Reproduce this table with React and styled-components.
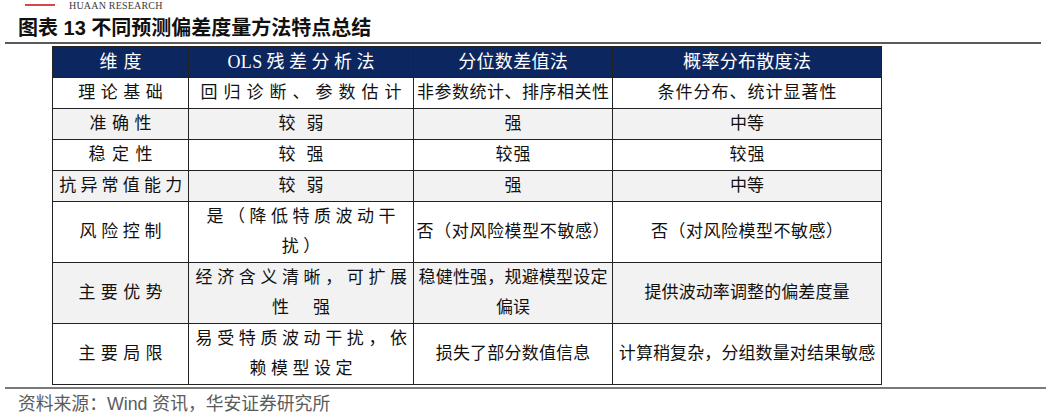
import React from "react";
import styled, { createGlobalStyle } from "styled-components";

const GlobalStyle = createGlobalStyle`
   html, body {
      margin: 0;
      padding: 0;
      background: #ffffff;
   }
   body {
      font-family: "Liberation Serif", "Noto Sans CJK SC", serif;
      color: #000;
   }
`;

const cjkSerif = `"Liberation Serif", "Noto Sans CJK SC", serif`;
const cjkSans = `"Liberation Sans", "Noto Sans CJK SC", sans-serif`;

export const ReportStyle = {
   Page: styled.div`
      width: 1046px;
      height: 418px;
      overflow: hidden;
      box-sizing: border-box;
   `,
   Brand: styled.div`
      height: 12px;
      display: flex;
      align-items: center;
      gap: 14px;
      padding-left: 25px;
      overflow: hidden;
   `,
   BrandLine: styled.span`
      width: 30px;
      height: 1.5px;
      margin-top: -2px;
      background-color: #d8464a;
   `,
   BrandText: styled.span`
      font-family: "Liberation Serif", serif;
      font-size: 10px;
      line-height: 10px;
      margin-top: -1px;
      color: #3a3a3a;
      letter-spacing: 0.2px;
   `,
   Title: styled.h1`
      margin: 0;
      padding: 2px 0 0 18px;
      height: 28px;
      line-height: 28px;
      font-family: ${cjkSans};
      font-size: 20px;
      font-weight: 700;
      color: #111;
   `,
   Rule: styled.div`
      margin: ${(p) => p.$margin || "0"};
      margin-left: 5px;
      width: ${(p) => p.$width || "1036px"};
      height: 2px;
      background-color: ${(p) => p.$color || "#5a5a5a"};
   `,
   TableWrap: styled.div`
      padding-left: 52px;
      margin-top: 2px;
   `,
   Table: styled.table`
      border-collapse: collapse;
      table-layout: fixed;
      width: 829px;
      border: 1px solid #222;
   `,
   Head: styled.th`
      background-color: #0c2660;
      color: #ffffff;
      font-family: ${cjkSerif};
      font-size: 18px;
      font-weight: 400;
      line-height: 30px;
      height: 30px;
      padding: 0 0 0 ${(p) => p.$sp}px;
      text-align: center;
      letter-spacing: ${(p) => p.$sp}px;
      border: 1px solid #222;
   `,
   Latin: styled.span`
      letter-spacing: 0.3px;
      margin-right: 4px;
   `,
   Row: styled.tr`
      background-color: ${(p) => (p.$shade ? "#f2f2f2" : "#ffffff")};
   `,
   Cell: styled.td`
      font-family: ${cjkSerif};
      font-size: 17px;
      line-height: 30px;
      padding: 0 2px;
      text-align: center;
      vertical-align: middle;
      white-space: nowrap;
      color: #111;
      border: 1px solid #222;
   `,
   // 한 줄 텍스트 - 자간은 줄마다 다름
   Line: styled.div`
      height: 30px;
      letter-spacing: ${(p) => p.$sp}px;
      padding-left: ${(p) => p.$sp}px;
   `,
   Source: styled.div`
      margin-top: 3px;
      padding-left: 18px;
      font-family: "Liberation Sans", "Noto Sans CJK SC", sans-serif;
      font-size: 17.8px;
      line-height: 24px;
      color: #5b5b5b;
   `,
};

const S = ReportStyle;

const headers = [
   { key: "dim", text: "维度", sp: 6 },
   { key: "ols", latin: "OLS", text: "残差分析法", sp: 4.5 },
   { key: "qnt", text: "分位数差值法", sp: 0.3 },
   { key: "prob", text: "概率分布散度法", sp: 0.3 },
];

// [text, letter-spacing]
const rows = [
   {
      label: ["理论基础", 5.5],
      cells: [
         [["回归诊断、参数估计", 6]],
         [["非参数统计、排序相关性", 0.5]],
         [["条件分布、统计显著性", 1]],
      ],
   },
   {
      label: ["准确性", 5.5],
      cells: [[["较弱", 11]], [["强", 0]], [["中等", 0]]],
   },
   {
      label: ["稳定性", 6.5],
      cells: [[["较强", 11]], [["较强", 1]], [["较强", 1]]],
   },
   {
      label: ["抗异常值能力", 4.2],
      cells: [[["较弱", 11]], [["强", 0]], [["中等", 0]]],
   },
   {
      label: ["风险控制", 4.7],
      cells: [
         [
            ["是（降低特质波动干", 4.5],
            ["扰）", 4.5],
         ],
         [["否（对风险模型不敏感）", 0.6]],
         [["否（对风险模型不敏感）", 0.5]],
      ],
   },
   {
      label: ["主要优势", 5.3],
      cells: [
         [
            ["经济含义清晰，可扩展", 4.6],
            ["性强", 24],
         ],
         [
            ["稳健性强，规避模型设定", 0.2],
            ["偏误", 0],
         ],
         [["提供波动率调整的偏差度量", 0.1]],
      ],
   },
   {
      label: ["主要局限", 5.3],
      cells: [
         [
            ["易受特质波动干扰，依", 4.6],
            ["赖模型设定", 4.5],
         ],
         [["损失了部分数值信息", 0.2]],
         [["计算稍复杂，分组数量对结果敏感", 0.1]],
      ],
   },
];

function App() {
   return (
      <>
         <GlobalStyle />
         <S.Page>
            <S.Brand>
               <S.BrandLine />
               <S.BrandText>HUAAN RESEARCH</S.BrandText>
            </S.Brand>

            <S.Title>图表 13 不同预测偏差度量方法特点总结</S.Title>
            <S.Rule />

            <S.TableWrap>
               <S.Table>
                  <colgroup>
                     <col style={{ width: 136 }} />
                     <col style={{ width: 225 }} />
                     <col style={{ width: 199 }} />
                     <col style={{ width: 269 }} />
                  </colgroup>
                  <thead>
                     <tr>
                        {headers.map((h) => (
                           <S.Head key={h.key} $sp={h.sp}>
                              {h.latin && <S.Latin>{h.latin}</S.Latin>}
                              {h.text}
                           </S.Head>
                        ))}
                     </tr>
                  </thead>
                  <tbody>
                     {rows.map((row, i) => (
                        <S.Row key={row.label[0]} $shade={i % 2 === 1}>
                           <S.Cell>
                              <S.Line $sp={row.label[1]}>{row.label[0]}</S.Line>
                           </S.Cell>
                           {row.cells.map((lines, j) => (
                              <S.Cell key={j}>
                                 {lines.map(([t, sp]) => (
                                    <S.Line key={t} $sp={sp}>
                                       {t}
                                    </S.Line>
                                 ))}
                              </S.Cell>
                           ))}
                        </S.Row>
                     ))}
                  </tbody>
               </S.Table>
            </S.TableWrap>

            <S.Rule $margin="2px 0 0 0" $width="1041px" $color="#7a7a7a" />
            {/* 출처 */}
            <S.Source>资料来源：Wind 资讯，华安证券研究所</S.Source>
         </S.Page>
      </>
   );
}

export default App;
